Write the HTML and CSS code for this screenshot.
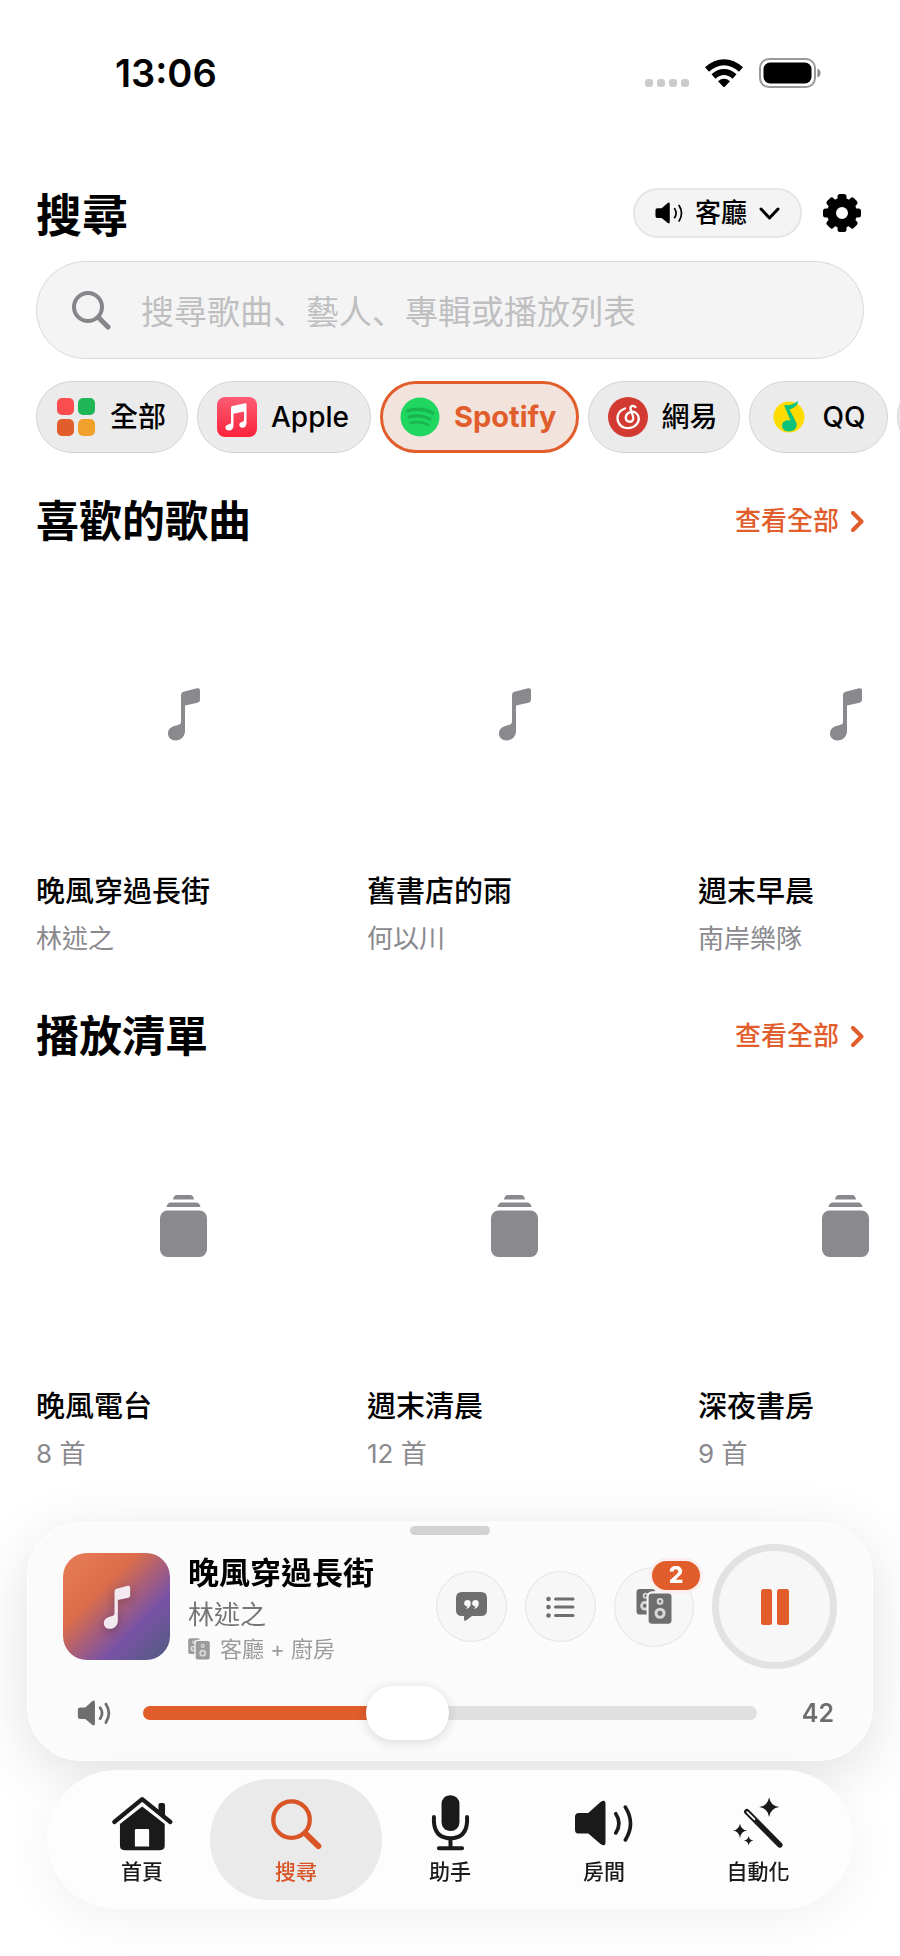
FILE: index.html
```html
<!DOCTYPE html>
<html lang="zh-Hant">
<head>
    <meta charset="UTF-8">
    <meta name="viewport" content="width=device-width, initial-scale=1.0">
    <title>搜尋</title>
    <link rel="stylesheet" href="styles.css">
</head>
<body>
    <!-- shared icons -->
    <svg class="sprite" aria-hidden="true">
        <symbol id="note" viewBox="0 0 34 54">
            <path fill="currentColor" d="M14 8Q14 5.4 16.5 4.8L30 1.3Q33 .6 33 3.5V13Q33 15.2 30.6 15.8L18 18.6V44C18 49.4 13.8 53.5 8.5 53.5C4 53.5 1 50.6 1 46.6C1 42 4.400 39.600 9 38.500C12.500 37.600 14 37.200 14 34.500Z"/>
        </symbol>
        <symbol id="stack" viewBox="0 0 47 68">
            <path fill="currentColor" d="M13 4.500C13.500 1.500 14.500 0 17 0H30C32.500 0 33.500 1.500 34 4.500ZM6.500 12C7 9 8.500 7.500 11 7.500H36C38.500 7.500 40 9 40.500 12Z"/>
            <rect fill="currentColor" y="15.500" width="47" height="46.500" rx="7.500"/>
        </symbol>
        <symbol id="speaker" viewBox="0 0 180 140">
            <path fill="currentColor" d="M3 52Q3 40 15 40H43L80 7Q95-3 95 12V128Q95 143 80 133L43 102H15Q3 102 3 90Z"/>
            <path fill="none" stroke="currentColor" stroke-width="11" stroke-linecap="round" d="M126 42Q145 71 126 100M155 22Q186 72 155 121"/>
        </symbol>
        <symbol id="speaker-bold" viewBox="0 0 180 140">
            <path fill="currentColor" d="M3 52Q3 40 15 40H43L80 7Q95-3 95 12V128Q95 143 80 133L43 102H15Q3 102 3 90Z"/>
            <path fill="none" stroke="currentColor" stroke-width="15" stroke-linecap="round" d="M123 42Q144 71 123 100M154 22Q186 72 154 121"/>
        </symbol>
        <symbol id="pair" viewBox="0 0 106 104">
            <rect fill="currentColor" x="1" y="0" width="56" height="76" rx="10"/>
            <circle cx="28" cy="20" r="6" fill="none" stroke="#d8d8d8" stroke-width="5"/>
            <circle cx="26" cy="50" r="10" fill="none" stroke="#d8d8d8" stroke-width="8"/>
            <rect fill="currentColor" stroke="#f7f7f7" stroke-width="6" x="34" y="10" width="74" height="96" rx="13"/>
            <circle cx="71" cy="37" r="7" fill="none" stroke="#d8d8d8" stroke-width="6"/>
            <circle cx="71" cy="72" r="12" fill="none" stroke="#d8d8d8" stroke-width="9"/>
        </symbol>
        <symbol id="chevron" viewBox="0 0 13 21">
            <path fill="none" stroke="currentColor" stroke-width="4" stroke-linecap="round" stroke-linejoin="round" d="M2 2l8.500 8.500L2 19"/>
        </symbol>
    </svg>

    <div class="statusbar">
        <span class="clock">13:06</span>
        <div class="status-icons">
            <svg width="44" height="29" viewBox="0 0 44 29" fill="#cbcbcb"><rect y="20" width="8" height="8" rx="3"/><rect x="12" y="20" width="8" height="8" rx="3"/><rect x="24" y="20" width="8" height="8" rx="3"/><rect x="36" y="20" width="8" height="8" rx="3"/></svg>
            <svg width="38" height="29" viewBox="0 0 38 29">
                <path fill="none" stroke="#000" stroke-width="6" d="M2 10.500Q10 3.200 19 3.200T36 10.500M8.500 17.500Q13.500 13 19 13T29.500 17.500"/>
                <path d="M13 22.200Q19 17.500 25 22.200L20 27.500Q19 28.500 18 27.500Z"/>
            </svg>
            <svg width="62" height="30" viewBox="0 0 62 30">
                <rect x="1" y="1" width="55" height="28" rx="9" fill="none" stroke="#999" stroke-width="2"/>
                <rect x="4.500" y="4.500" width="48" height="21" rx="6.500"/>
                <path fill="#888" d="M58.500 10.500Q61.500 12 61.500 15T58.500 19.500Z"/>
            </svg>
        </div>
    </div>

    <main>
        <header class="topbar">
            <h1>搜尋</h1>
            <button class="room-select">
                <svg class="room-icon"><use href="#speaker"/></svg>
                客廳
                <svg width="21" height="13" viewBox="0 0 21 13"><path fill="none" stroke="#000" stroke-width="3" stroke-linecap="round" stroke-linejoin="round" d="M2 2l8.500 9L19 2"/></svg>
            </button>
            <button class="settings" aria-label="設定">
                <svg width="38" height="38" viewBox="-19 -19 38 38">
                    <circle r="10.500" fill="none" stroke="#000" stroke-width="9"/>
                    <g id="teeth"><rect x="-4.500" y="-19" width="9" height="8" rx="2.500"/><rect x="-4.500" y="11" width="9" height="8" rx="2.500"/><rect x="-19" y="-4.500" width="8" height="9" rx="2.500"/><rect x="11" y="-4.500" width="8" height="9" rx="2.500"/></g>
                    <use href="#teeth" transform="rotate(45)"/>
                </svg>
            </button>
        </header>

        <label class="search">
            <svg width="39" height="39" viewBox="0 0 39 39" fill="none" stroke="#85858a" stroke-linecap="round"><circle cx="16" cy="16" r="14" stroke-width="4"/><path stroke-width="5" d="M27 27l9 9"/></svg>
            <input type="search" lang="zh-Hans" aria-label="搜尋" placeholder="搜尋歌曲、藝人、專輯或播放列表">
        </label>

        <div class="chips">
            <button class="chip">
                <svg viewBox="0 0 40 40"><rect x="1" y="1" width="17" height="17" rx="5" fill="#fb4d4d"/><rect x="22" y="1" width="17" height="17" rx="5" fill="#1fb755"/><rect x="1" y="22" width="17" height="17" rx="5" fill="#e15d2c"/><rect x="22" y="22" width="17" height="17" rx="5" fill="#f0a12b"/></svg>
                全部
            </button>
            <button class="chip">
                <svg viewBox="0 0 40 40">
                    <defs><linearGradient id="am" x2="0" y2="1"><stop stop-color="#fb5c74"/><stop offset="1" stop-color="#fa233b"/></linearGradient></defs>
                    <rect width="40" height="40" rx="8" fill="url(#am)"/>
                    <path fill="#fff" d="M14 10.500Q14 9.300 15.300 9L28.200 6.200Q29.500 6 29.500 7.300V26C29.500 29 27.800 30.800 25.500 30.800C23.500 30.800 22.300 29.500 22.300 27.800C22.300 24.500 27 25.500 27 23V14.500L16.500 16.800V28.500C16.500 31.800 14.500 33.600 12 33.600C9.800 33.600 8.500 32.300 8.500 30.500C8.500 26.800 14 28 14 25.500Z"/>
                </svg>
                Apple
            </button>
            <button class="chip active">
                <svg viewBox="0 0 40 40"><circle cx="20" cy="20" r="19.500" fill="#1fd760"/><g fill="none" stroke="#19b34f" stroke-linecap="round"><path stroke-width="3.500" d="M8 13.800Q21 10 33 16"/><path stroke-width="3" d="M9 20Q20 17 30 22"/><path stroke-width="2.500" d="M10.500 26Q20 23.500 28 28"/></g></svg>
                Spotify
            </button>
            <button class="chip">
                <svg viewBox="0 0 40 40"><circle cx="20" cy="20" r="20" fill="#d33a31"/><path fill="none" stroke="#fff" stroke-width="2.300" stroke-linecap="round" d="M17 11.500C10 14 8 20 10.500 25.500C13 31 19.500 32.500 25 30C31 27 32.500 20.500 28.500 16.500C25 13 18.500 15 17.800 20C17.300 25 24 26.500 25.200 22C25.800 19 22.500 13.500 22.500 11.500C22.500 8.500 25.500 8 27.500 10"/></svg>
                網易
            </button>
            <button class="chip">
                <svg viewBox="0 0 40 40"><circle cx="20" cy="20" r="15.500" fill="#ffdc00"/><path fill="#0cc27a" d="M15 8Q23 9 29 4Q29 10 20.500 12.500L27 25C29.500 31 24.500 34.500 20 34.500C15.500 34.500 12.500 31.500 13 28C13.500 24 18 22.500 21.500 23.500Z"/></svg>
                QQ
            </button>
            <button class="chip" aria-label="更多"></button>
        </div>

        <section>
            <div class="section-head">
                <h2>喜歡的歌曲</h2>
                <a href="#">查看全部 <svg width="13" height="21"><use href="#chevron"/></svg></a>
            </div>
            <div class="cards">
                <article class="card">
                    <div class="cover"><svg width="34" height="54"><use href="#note"/></svg></div>
                    <h3>晚風穿過長街</h3>
                    <p>林述之</p>
                </article>
                <article class="card">
                    <div class="cover"><svg width="34" height="54"><use href="#note"/></svg></div>
                    <h3>舊書店的雨</h3>
                    <p>何以川</p>
                </article>
                <article class="card">
                    <div class="cover"><svg width="34" height="54"><use href="#note"/></svg></div>
                    <h3>週末早晨</h3>
                    <p>南岸樂隊</p>
                </article>
            </div>
        </section>

        <section>
            <div class="section-head">
                <h2>播放清單</h2>
                <a href="#">查看全部 <svg width="13" height="21"><use href="#chevron"/></svg></a>
            </div>
            <div class="cards">
                <article class="card">
                    <div class="cover"><svg width="47" height="68"><use href="#stack"/></svg></div>
                    <h3>晚風電台</h3>
                    <p>8 首</p>
                </article>
                <article class="card">
                    <div class="cover"><svg width="47" height="68"><use href="#stack"/></svg></div>
                    <h3>週末清晨</h3>
                    <p>12 首</p>
                </article>
                <article class="card">
                    <div class="cover"><svg width="47" height="68"><use href="#stack"/></svg></div>
                    <h3>深夜書房</h3>
                    <p>9 首</p>
                </article>
            </div>
        </section>
    </main>

    <div class="dock">
        <div class="player">
            <div class="handle"></div>
            <div class="now">
                <div class="album"><svg width="28" height="46"><use href="#note"/></svg></div>
                <div class="track">
                    <strong>晚風穿過長街</strong>
                    <span class="artist">林述之</span>
                    <span class="rooms"><svg width="22" height="22"><use href="#pair"/></svg>客廳 + 廚房</span>
                </div>
                <div class="controls">
                    <button class="round" aria-label="歌詞">
                        <svg width="31" height="29" viewBox="0 0 31 29">
                            <path fill="currentColor" d="M6 0H25Q31 0 31 6V18Q31 24 25 24H16L10 28.500Q8 29.500 8 27.500V24H6Q0 24 0 18V6Q0 0 6 0Z"/>
                            <path fill="#f7f7f7" d="M11.500 8a3.200 3.200 0 1 0 .5 6.300Q11.500 15.500 10 16.200Q10.500 17 11.200 16.600Q14.800 14.800 14.800 11.200Q14.800 8 11.500 8ZM19.500 8a3.200 3.200 0 1 0 .5 6.300Q19.500 15.500 18 16.200Q18.500 17 19.200 16.600Q22.800 14.800 22.800 11.200Q22.800 8 19.500 8Z"/>
                        </svg>
                    </button>
                    <button class="round" aria-label="播放佇列">
                        <svg width="29" height="22" viewBox="0 0 29 22"><g fill="currentColor"><circle cx="2.500" cy="3" r="2.300"/><circle cx="2.500" cy="11" r="2.300"/><circle cx="2.500" cy="19.500" r="2.300"/></g><path stroke="currentColor" stroke-width="3" stroke-linecap="round" d="M9.500 3h17.500M9.500 11h17.500M9.500 19.500h17.500"/></svg>
                    </button>
                    <button class="round large" aria-label="輸出裝置">
                        <svg width="36" height="35"><use href="#pair"/></svg>
                        <span class="badge">2</span>
                    </button>
                    <button class="pause" aria-label="暫停">
                        <svg width="28" height="36" viewBox="0 0 28 36" fill="currentColor"><rect width="11" height="36" rx="2.500"/><rect x="16" width="12" height="36" rx="2.500"/></svg>
                    </button>
                </div>
            </div>
            <div class="volume">
                <svg width="34" height="26"><use href="#speaker-bold"/></svg>
                <input type="range" id="volume" min="0" max="100" value="42" aria-label="音量" style="--level: 42%">
                <output for="volume">42</output>
            </div>
        </div>

        <nav class="tabs">
            <a href="#">
                <svg viewBox="0 0 184 168"><path fill="none" stroke="currentColor" stroke-width="13" stroke-linecap="round" stroke-linejoin="round" d="M7 81L91 12L176 81"/><path fill="currentColor" d="M140 30Q140 24 146 24H154Q160 24 160 30V66L140 50ZM24 87L91 34L159 87V152Q159 166 145 166H38Q24 166 24 152ZM69 106V155H112V106Q112 102 108 102H73Q69 102 69 106Z"/></svg>
                首頁
            </a>
            <a href="#" class="current">
                <svg viewBox="0 0 184 168"><g fill="none" stroke="currentColor" stroke-linecap="round"><circle cx="77" cy="74" r="55" stroke-width="13"/><path stroke-width="18" d="M120 117L158 154"/></g></svg>
                搜尋
            </a>
            <a href="#">
                <svg viewBox="0 0 184 168"><rect fill="currentColor" x="65" y="0" width="54" height="108" rx="26"/><path fill="none" stroke="currentColor" stroke-width="12" stroke-linecap="round" d="M42 66V80Q45 130 92 130T142 80V66M92 130V160M57 160H127"/></svg>
                助手
            </a>
            <a href="#">
                <svg viewBox="0 -14 184 168"><use href="#speaker" width="180" height="140"/></svg>
                房間
            </a>
            <a href="#">
                <svg viewBox="0 0 184 168"><path stroke="currentColor" stroke-width="17" stroke-linecap="round" d="M57 50L156 150"/><path stroke="#fff" stroke-width="5" stroke-linecap="round" d="M58 51L80 73"/><path fill="currentColor" d="M124 6Q128 32 155 36Q128 40 124 66Q120 40 94 36Q120 32 124 6ZM36 86Q39 104 58 107Q39 110 36 129Q33 110 15 107Q33 104 36 86ZM62 123Q64 135 77 137Q64 139 62 152Q60 139 48 137Q60 135 62 123Z"/></svg>
                自動化
            </a>
        </nav>
    </div>

    <script>
        let volume = document.getElementById('volume');
        volume.addEventListener('input', () => {
            volume.style.setProperty('--level', volume.value + '%');
            document.querySelector('output').value = volume.value;
        });
    </script>
</body>
</html>
```
FILE: styles.css
```css
* { box-sizing: border-box; }
body { margin: 0; background: #fff; color: #000; font-family: Inter, "Noto Sans CJK TC", sans-serif; overflow-x: hidden; }
h1, h2, h3, p { margin: 0; }
button { margin: 0; padding: 0; border: none; background: none; color: inherit; font: inherit; cursor: pointer; }
a { color: inherit; text-decoration: none; }
svg { flex: none; display: block; }
.sprite { position: absolute; width: 0; height: 0; }

/* status bar */
.statusbar { display: flex; justify-content: space-between; align-items: center; height: 146px; padding: 0 79px 0 115px; }
.clock { font-size: 38px; font-weight: 600; line-height: 44px; }
.status-icons { display: flex; align-items: center; gap: 16px; }

main { padding: 42px 36px 430px; }

.topbar { display: flex; align-items: center; height: 50px; }
.topbar h1 { flex: 1; padding-top: 4px; font-size: 46px; font-weight: 700; line-height: 50px; }
.room-select { display: flex; align-items: center; gap: 12px; height: 50px; padding: 0 20px; border: 2px solid #e6e6e6; border-radius: 25px; background: #f4f4f4; font-size: 26px; font-weight: 500; line-height: 36px; }
.room-icon { width: 28px; height: 22px; }
.settings { margin: 0 3px 0 21px; }

.search { display: flex; align-items: center; gap: 30px; height: 98px; margin-top: 23px; padding: 0 35px; border: 1px solid #d9d9d9; border-radius: 49px; background: #f4f4f4; }
.search input { flex: 1; min-width: 0; padding: 0; border: none; outline: none; background: none; font: inherit; font-family: "Noto Sans CJK SC", sans-serif; font-size: 33px; line-height: 48px; }
.search input::placeholder { color: #bfbfc1; }

.chips { display: flex; gap: 9px; margin: 22px -36px 38px 0; overflow-x: auto; scrollbar-width: none; }
.chip { flex: none; display: flex; align-items: center; gap: 14px; min-width: 139px; height: 72px; padding: 0 21px 0 19px; border: 1px solid #d4d4d4; border-radius: 36px; background: #ebebeb; font-size: 28px; font-weight: 500; line-height: 40px; }
.chip svg { width: 40px; height: 40px; }
.chip.active { padding: 0 19px 0 17px; border: 3px solid #e15d2c; background: #f3e3dd; color: #e15d2c; font-size: 29px; font-weight: 700; }

section { margin-bottom: 47px; }
.section-head { display: flex; justify-content: space-between; align-items: center; height: 60px; margin-bottom: 15px; }
.section-head h2 { font-size: 43px; font-weight: 700; line-height: 60px; }
.section-head a { display: flex; align-items: center; gap: 12px; color: #e15d2c; font-size: 26px; font-weight: 500; line-height: 36px; }

.cards { display: flex; gap: 36px; margin-right: -36px; overflow-x: auto; scrollbar-width: none; }
.card { flex: none; width: 295px; }
.cover { display: flex; align-items: center; justify-content: center; height: 295px; margin-bottom: 11px; color: #8a898e; }
.card h3 { margin-bottom: 7px; font-size: 29px; font-weight: 500; line-height: 40px; }
.card p { color: #8a898e; font-size: 26px; line-height: 40px; }

/* player and tabs float over the page */
.dock { position: fixed; right: 27px; bottom: 47px; left: 27px; }
.player { position: relative; margin-bottom: 9px; padding: 21px 35px 20px; border: 1px solid #fff; border-radius: 54px; background: #fbfbfb; box-shadow: 0 14px 60px rgba(0, 0, 0, 0.12); }
.handle { position: absolute; top: 3px; left: 50%; width: 80px; height: 9px; margin-left: -40px; border-radius: 5px; background: #d2d2d3; }

.now { display: flex; align-items: center; gap: 18px; height: 125px; margin-bottom: 17px; }
.album { flex: none; display: flex; align-items: center; justify-content: center; width: 107px; height: 107px; border-radius: 24px; background: linear-gradient(135deg, #e67e57, #dd6d48 34%, #7a52a5 68%, #4f5c80); color: #f3e9f0; }
.album svg { filter: drop-shadow(0 2px 4px rgba(0, 0, 0, 0.25)); }
.track { flex: 1; display: flex; flex-direction: column; min-width: 0; white-space: nowrap; }
.track strong { font-size: 31px; font-weight: 700; line-height: 44px; }
.artist { color: #757575; font-size: 26px; line-height: 40px; }
.rooms { display: flex; align-items: center; gap: 10px; color: #9b9b9e; font-size: 22px; line-height: 28px; }

.controls { display: flex; align-items: center; gap: 18px; }
.round { position: relative; display: flex; align-items: center; justify-content: center; width: 71px; height: 71px; border: 1px solid #e4e4e4; border-radius: 50%; background: #f7f7f7; color: #6e6e6e; }
.round.large { width: 80px; height: 80px; }
.badge { position: absolute; top: -10px; right: -10px; width: 54px; height: 35px; border: 3px solid #fbeeec; border-radius: 18px; background: #e15d2c; color: #fff; font-size: 23px; font-weight: 800; line-height: 29px; text-align: center; }
.pause { display: flex; align-items: center; justify-content: center; width: 125px; height: 125px; border: 7px solid #e2e2e4; border-radius: 50%; background: #f7f7f7; color: #e15d2c; }

.volume { display: flex; align-items: center; height: 54px; padding: 0 3px 0 14px; color: #6e6e6e; }
.volume input { flex: 1; min-width: 0; height: 54px; margin: 0 0 0 32px; background: none; appearance: none; cursor: pointer; }
.volume input::-webkit-slider-runnable-track { height: 14px; border-radius: 7px; background: linear-gradient(to right, #e15d2c var(--level), #e0e0e0 var(--level)); }
.volume input::-webkit-slider-thumb { appearance: none; width: 83px; height: 54px; margin-top: -20px; border-radius: 27px; background: #fff; box-shadow: 0 2px 12px rgba(0, 0, 0, 0.14); }
.volume output { width: 77px; font-size: 25px; font-weight: 600; text-align: right; }

.tabs { position: relative; display: flex; height: 139px; margin: 0 20px; padding: 0 18px; border-radius: 70px; background: #fdfdfd; box-shadow: 0 10px 50px rgba(0, 0, 0, 0.06); }
.tabs a { position: relative; flex: 1; display: flex; flex-direction: column; align-items: center; justify-content: center; gap: 8px; color: #1a1a1a; font-size: 21px; font-weight: 500; line-height: 26px; }
.tabs svg { width: 61px; height: 56px; overflow: visible; }
.tabs .current { z-index: 0; color: #d95526; }
.current::before { content: ""; position: absolute; z-index: -1; inset: 9px -9px; border-radius: 60px; background: #eaeaea; }
```
